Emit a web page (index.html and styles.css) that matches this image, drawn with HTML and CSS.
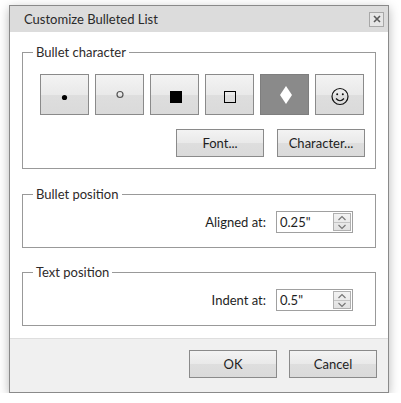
FILE: index.html
```html
<!DOCTYPE html>
<html lang="en">
<head>
<meta charset="utf-8">
<title>Customize Bulleted List</title>
<link rel="stylesheet" href="styles.css">
</head>
<body>
<div class="dialog">
  <div class="titlebar">
    <span class="title">Customize Bulleted List</span>
    <button class="close" aria-label="Close">
      <svg width="12" height="12" viewBox="0 0 12 12"><path d="M3 3 L9 9 M9 3 L3 9" stroke="#5a5a5a" stroke-width="1.6" fill="none"/></svg>
    </button>
  </div>
  <div class="content">
    <fieldset class="group group-char">
      <legend>Bullet character</legend>
      <div class="bullets">
        <button class="bullet">
          <svg width="47" height="39" viewBox="0 0 47 39"><circle cx="23.5" cy="22.5" r="2.6" fill="#000"/></svg>
        </button>
        <button class="bullet">
          <svg width="47" height="39" viewBox="0 0 47 39"><circle cx="24" cy="19.5" r="3" fill="none" stroke="#555" stroke-width="1.2"/></svg>
        </button>
        <button class="bullet">
          <svg width="47" height="39" viewBox="0 0 47 39"><rect x="19" y="16" width="12" height="12" fill="#000"/></svg>
        </button>
        <button class="bullet">
          <svg width="47" height="39" viewBox="0 0 47 39"><rect x="18.5" y="16.5" width="11" height="11" fill="none" stroke="#000" stroke-width="1"/></svg>
        </button>
        <button class="bullet selected">
          <svg width="47" height="39" viewBox="0 0 47 39"><path d="M25 11 L31 20 L25 29 L19 20 Z" fill="#fff"/></svg>
        </button>
        <button class="bullet">
          <svg width="47" height="39" viewBox="0 0 47 39"><circle cx="24" cy="21.5" r="8" fill="none" stroke="#111" stroke-width="1.2"/><circle cx="21.2" cy="19.2" r="1" fill="#111"/><circle cx="26.8" cy="19.2" r="1" fill="#111"/><path d="M20 23.5 Q24 28 28 23.5" fill="none" stroke="#111" stroke-width="1.2"/></svg>
        </button>
      </div>
      <div class="actions">
        <button class="btn">Font...</button>
        <button class="btn">Character...</button>
      </div>
    </fieldset>

    <fieldset class="group group-pos">
      <legend>Bullet position</legend>
      <div class="field">
        <label class="field-label">Aligned at:</label>
        <div class="spin">
          <span class="spin-value">0.25"</span>
          <div class="spin-btns">
            <span class="spin-up"><svg width="16" height="8" viewBox="0 0 16 8"><path d="M4.5 6 L8 2.5 L11.5 6" fill="none" stroke="#777" stroke-width="1.2"/></svg></span>
            <span class="spin-down"><svg width="16" height="8" viewBox="0 0 16 8"><path d="M4.5 2 L8 5.5 L11.5 2" fill="none" stroke="#777" stroke-width="1.2"/></svg></span>
          </div>
        </div>
      </div>
    </fieldset>

    <fieldset class="group group-text">
      <legend>Text position</legend>
      <div class="field">
        <label class="field-label">Indent at:</label>
        <div class="spin">
          <span class="spin-value">0.5"</span>
          <div class="spin-btns">
            <span class="spin-up"><svg width="16" height="8" viewBox="0 0 16 8"><path d="M4.5 6 L8 2.5 L11.5 6" fill="none" stroke="#777" stroke-width="1.2"/></svg></span>
            <span class="spin-down"><svg width="16" height="8" viewBox="0 0 16 8"><path d="M4.5 2 L8 5.5 L11.5 2" fill="none" stroke="#777" stroke-width="1.2"/></svg></span>
          </div>
        </div>
      </div>
    </fieldset>
  </div>
  <div class="footer">
    <button class="btn">OK</button>
    <button class="btn">Cancel</button>
  </div>
</div>
</body>
</html>
```

FILE: styles.css
```css
html, body {
  margin: 0;
  padding: 0;
  background: #ffffff;
}

body {
  font-family: "Lato", "Noto Sans", sans-serif;
  font-size: 13px;
  color: #1e1e1e;
}

.dialog {
  margin: 5px 0 0 9px;
  width: 380px;
  height: 388px;
  box-sizing: border-box;
  border: 1px solid #8a8a8a;
  background: #ffffff;
  box-shadow: 0 3px 10px rgba(0, 0, 0, 0.28);
  display: flex;
  flex-direction: column;
}

.titlebar {
  height: 26px;
  flex: none;
  background: #dcdcdc;
  display: flex;
  align-items: center;
  justify-content: space-between;
  padding: 0 4px 0 14px;
}

.title {
  font-size: 13px;
  color: #2a2a2a;
}

.close {
  width: 15px;
  height: 15px;
  padding: 0;
  margin: 0;
  border: 1px solid #a8a8a8;
  background: #e6e6e6;
  display: flex;
  align-items: center;
  justify-content: center;
}

.content {
  flex: none;
  padding: 11px 12px 12px 12px;
}

.group {
  margin: 0;
  border: 1px solid #999999;
  padding: 0 10px 0 17px;
  min-width: 0;
}

.group legend {
  margin-left: -7px;
  padding: 0 3px;
  font-size: 13px;
  line-height: 18px;
  color: #2e2a2a;
}

.group-char {
  padding-top: 13px;
  padding-bottom: 11px;
}

.group-pos {
  margin-top: 16px;
  padding-top: 8px;
  padding-bottom: 14px;
  padding-right: 22px;
}

.group-text {
  margin-top: 15px;
  padding-top: 8px;
  padding-bottom: 14px;
  padding-right: 22px;
}

button {
  font-family: inherit;
  font-size: 13px;
  color: #1e1e1e;
  margin: 0;
  border-radius: 0;
}

.bullets {
  display: flex;
  gap: 6px;
}

.bullet {
  width: 49px;
  height: 41px;
  padding: 0;
  border: 1px solid #8a8a8a;
  background: linear-gradient(to bottom, #f3f3f3 0%, #e9e9e9 50%, #dedede 50%, #dadada 100%);
  display: block;
}

.bullet svg {
  display: block;
}

.bullet.selected {
  background: #8a8a8a;
  border-color: #7e7e7e;
}

.actions {
  margin-top: 14px;
  display: flex;
  justify-content: flex-end;
  gap: 13px;
  padding-right: 0;
}

.btn {
  width: 88px;
  height: 28px;
  padding: 0;
  border: 1px solid #8a8a8a;
  background: linear-gradient(to bottom, #f3f3f3 0%, #e9e9e9 50%, #dedede 50%, #dadada 100%);
}

.field {
  display: flex;
  justify-content: flex-end;
  align-items: center;
  gap: 10px;
}

.field-label {
  font-size: 13px;
}

.spin {
  width: 77px;
  height: 22px;
  box-sizing: border-box;
  border: 1px solid #a0a0a0;
  background: #fff;
  display: flex;
  align-items: center;
  justify-content: space-between;
  padding: 0 1px 0 3px;
}

.spin-value {
  font-size: 13px;
}

.spin-btns {
  width: 18px;
  height: 18px;
  box-sizing: border-box;
  border: 1px solid #b0b0b0;
  background: linear-gradient(to bottom, #f2f2f2, #e2e2e2);
  display: flex;
  flex-direction: column;
}

.spin-up,
.spin-down {
  flex: 1;
  display: flex;
  align-items: center;
  justify-content: center;
}

.spin-up {
  border-bottom: 1px solid #c4c4c4;
}

.footer {
  flex: 1;
  background: #f0f0f0;
  border-top: 1px solid #dedede;
  display: flex;
  justify-content: flex-end;
  align-items: flex-start;
  gap: 12px;
  padding: 11px 11px 0 0;
}
```
